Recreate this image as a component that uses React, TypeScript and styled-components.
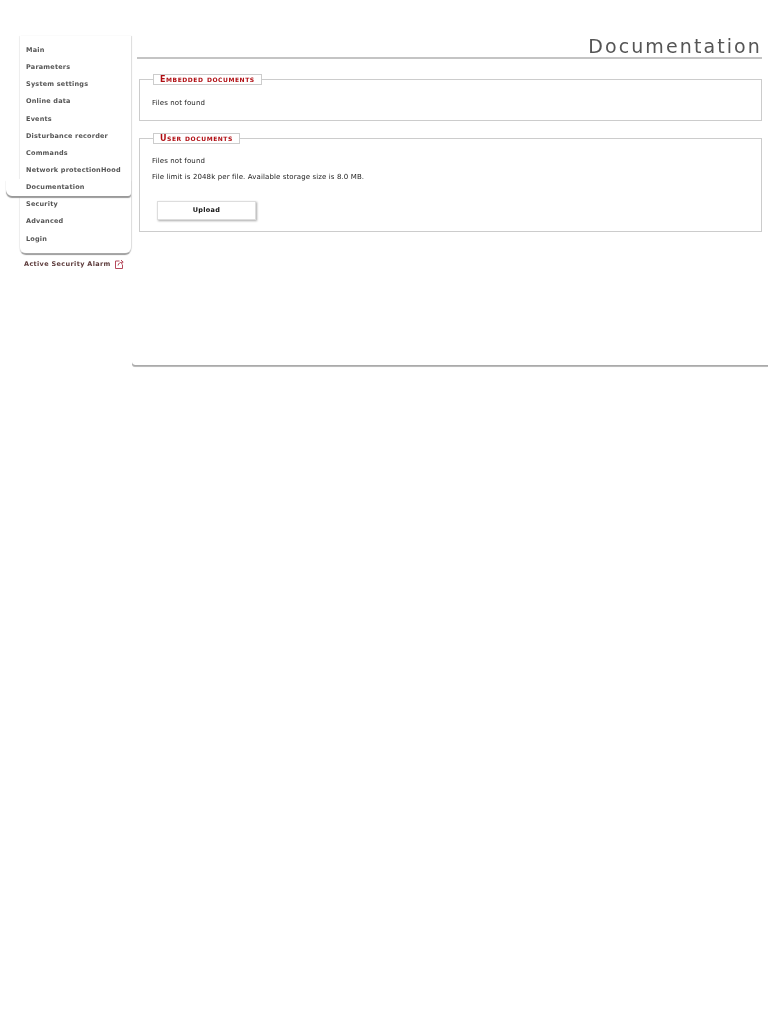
import styled, { createGlobalStyle } from "styled-components";

const GlobalStyle = createGlobalStyle`
  html, body {
    margin: 0;
    padding: 0;
    background: #fff;
  }
  body {
    font-family: "DejaVu Sans", Verdana, sans-serif;
    font-size: 7px;
    color: #111;
  }
`;

const Page = styled.div`
  display: flex;
  align-items: flex-start;
  width: 768px;
  height: 1024px;
  padding-top: 36px;
  box-sizing: border-box;
  overflow: hidden;
  will-change: transform;
`;

const Sidebar = styled.div`
  width: 131px;
  margin-right: 1px;
  padding-left: 20px;
  box-sizing: border-box;
  flex-shrink: 0;
`;

const Menu = styled.ul`
  list-style: none;
  margin: 0;
  padding: 6px 0 0;
  height: 217px;
  box-sizing: border-box;
  background: #fff;
  border-radius: 0 0 6px 6px;
  box-shadow: 1px 0 1px #ddd, -1px 0 1px #eee, 0 2px 1px #999;
`;

const MenuItem = styled.li<{ $active?: boolean }>`
  position: relative;
  z-index: ${(p) => (p.$active ? 1 : 0)};
  height: 17.15px;
  line-height: 17.15px;
  padding-left: ${(p) => (p.$active ? "20px" : "6px")};
  margin-left: ${(p) => (p.$active ? "-14px" : "0")};
  font-size: 6.5px;
  font-weight: 700;
  letter-spacing: 0.2px;
  color: #555;
  white-space: nowrap;
  background: ${(p) => (p.$active ? "#fff" : "transparent")};
  border-radius: ${(p) => (p.$active ? "0 0 3px 6px" : "0")};
  box-shadow: ${(p) => (p.$active ? "0 2px 1px #999" : "none")};
`;

const Alarm = styled.div`
  display: flex;
  align-items: center;
  gap: 4px;
  margin: 6px 0 0 4px;
  font-size: 6.5px;
  font-weight: 700;
  letter-spacing: 0.35px;
  color: #5c3b3b;
  white-space: nowrap;
`;

const Main = styled.div`
  width: 636px;
  height: 329px;
  padding: 0 6px 0 5px;
  box-sizing: border-box;
  border-radius: 0 0 0 3px;
  box-shadow: 0 1px 0 #aaa, 0 2px 0 #bbb, 0 3px 1px -1px #ddd;
`;

const Heading = styled.h1`
  margin: 0 0 15px;
  height: 21px;
  line-height: 20px;
  text-align: right;
  font-size: 19px;
  font-weight: 400;
  letter-spacing: 2.1px;
  color: #555;
  border-bottom: 2px solid #c4c4c4;
`;

const Group = styled.fieldset<{ $height: number }>`
  margin: 0 0 12px 2px;
  padding: 0 12px;
  height: ${(p) => p.$height}px;
  box-sizing: border-box;
  border: 1px solid #ccc;
`;

const GroupTitle = styled.legend`
  height: 11px;
  line-height: 9px;
  margin-left: 1px;
  padding: 0 6px;
  box-sizing: border-box;
  background: #fff;
  border: 1px solid #ccc;
  font-size: 8px;
  font-variant: small-caps;
  font-weight: 700;
  letter-spacing: 0.55px;
  color: #b00d12;
`;

const Notes = styled.div<{ $top: number }>`
  padding-top: ${(p) => p.$top}px;
`;

const Note = styled.p`
  margin: 0;
  height: 16px;
  line-height: 16px;
  font-size: 7px;
  letter-spacing: 0.11px;
  color: #222;
`;

const UploadButton = styled.button`
  display: block;
  width: 99px;
  height: 19px;
  margin: 16px 0 0 5px;
  padding: 0 0 1px;
  background: #fff;
  border: 1px solid #ddd;
  box-shadow: 1px 1px 2px #aaa;
  font-family: inherit;
  font-size: 6.5px;
  font-weight: 700;
  letter-spacing: 0.3px;
  color: #111;
`;

const items = [
  "Main",
  "Parameters",
  "System settings",
  "Online data",
  "Events",
  "Disturbance recorder",
  "Commands",
  "Network protectionHood",
  "Documentation",
  "Security",
  "Advanced",
  "Login",
];

function AlarmIcon() {
  return (
    <svg width="9" height="10" viewBox="0 0 9 10" fill="none" stroke="#b5485a" strokeWidth="1">
      <path d="M4.5 2H.5v7.5h7V5.5" />
      <path d="M3 6.5C3.5 4.2 5 3.2 7.5 3.2M6 1l2.2 2.2L6 5.2" />
    </svg>
  );
}

export default function App() {
  return (
    <Page>
      <GlobalStyle />
      <Sidebar>
        <Menu>
          {items.map((item) => (
            <MenuItem key={item} $active={item === "Documentation"}>
              {item}
            </MenuItem>
          ))}
        </Menu>
        <Alarm>
          Active Security Alarm <AlarmIcon />
        </Alarm>
      </Sidebar>
      <Main>
        <Heading>Documentation</Heading>
        <Group $height={47}>
          <GroupTitle>Embedded documents</GroupTitle>
          <Notes $top={10}>
            <Note>Files not found</Note>
          </Notes>
        </Group>
        <Group $height={99}>
          <GroupTitle>User documents</GroupTitle>
          <Notes $top={9}>
            <Note>Files not found</Note>
            <Note>File limit is 2048k per file. Available storage size is 8.0 MB.</Note>
          </Notes>
          <UploadButton>Upload</UploadButton>
        </Group>
      </Main>
    </Page>
  );
}
